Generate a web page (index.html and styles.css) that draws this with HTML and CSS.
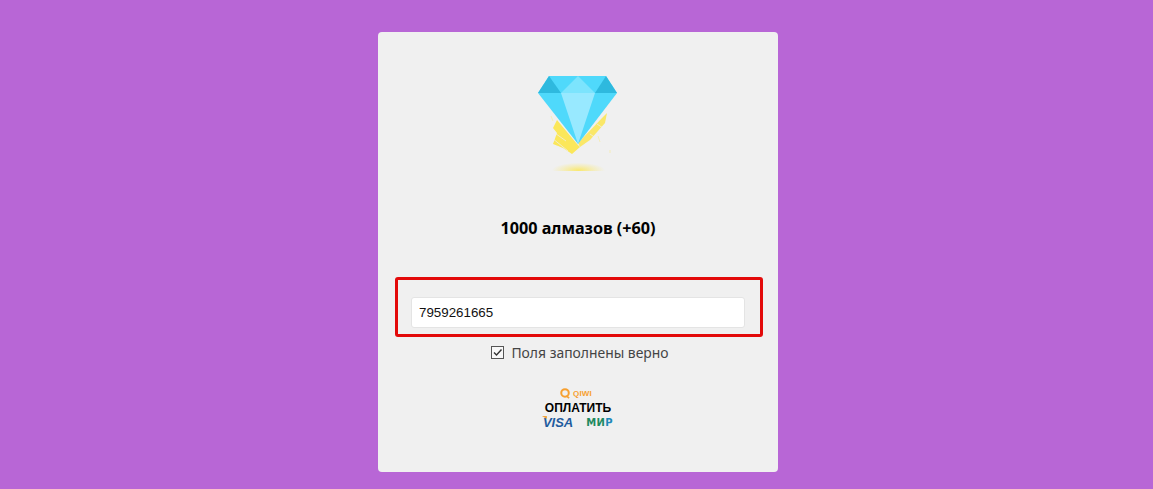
FILE: index.html
```html
<!DOCTYPE html>
<html lang="ru">
  <head>
    <meta charset="UTF-8" />
    <meta name="viewport" content="width=device-width, initial-scale=1.0" />
    <title>Оплата</title>
    <link rel="stylesheet" href="styles.css">
  </head>
  <body>
    <div class="card">
      <svg class="gem" viewBox="513 60 130 125" width="130" height="125">
        <defs>
          <radialGradient id="glow" cx="0.5" cy="0.95" r="0.5">
            <stop offset="0" stop-color="#fbe75a" stop-opacity="0.85" />
            <stop offset="0.55" stop-color="#fbe75a" stop-opacity="0.35" />
            <stop offset="1" stop-color="#fbe75a" stop-opacity="0" />
          </radialGradient>
          <filter id="soft"><feGaussianBlur stdDeviation="0.6" /></filter>
        </defs>
        <rect x="552" y="156" width="53" height="15" fill="url(#glow)" />
        <g filter="url(#soft)">
          <path d="M557 120 L577 144 L580 147 L572 154 L563 148 L553 144 L557 133 L553 128 Z" fill="#fbe75a" />
          <path d="M603 117 L607 113 L605 123 L590 140 L580 147 L578 143 Z" fill="#fbe75a" fill-opacity="0.9" />
          <path d="M552 131 L566 141 M552 138 L568 151 M557 146 L570 156 M597 124 L606 130 M590 134 L600 141" fill="none" stroke="#f0f0f0" stroke-opacity="0.7" />
        </g>
        <path d="M551 116 L553 121 M598 136 L600 142 M610 150 L610 153" fill="none" stroke="#fbe75a" stroke-opacity="0.35" />
        <path d="M549 76 L606 76 L617 93 L578 144 L538 93 Z" fill="#4fd9fb" />
        <path d="M549 76 L561 93 L538 93 Z" fill="#2eb9de" />
        <path d="M606 76 L595 93 L617 93 Z" fill="#2eb9de" />
        <path d="M578 76 L595 93 L561 93 Z" fill="#7ce4fd" />
        <path d="M561 93 L595 93 L578 144 Z" fill="#98e9ff" />
      </svg>

      <h2 class="title">1000 алмазов (+60)</h2>

      <div class="field__box">
        <input class="field" type="text" value="7959261665" />
      </div>

      <label class="agree">
        <svg viewBox="0 0 13 13" width="13" height="13">
          <rect x="0.5" y="0.5" width="12" height="12" fill="#f8f8f8" stroke="#555" />
          <path d="M3 6.5 L5.5 9 L10.5 3.5" fill="none" stroke="#333" stroke-width="1.4" />
        </svg>
        <span>Поля заполнены верно</span>
      </label>

      <button class="pay">
        <span class="pay__qiwi">
          <svg viewBox="0 0 12 12" width="12" height="11">
            <circle cx="6" cy="5.4" r="4.1" fill="none" stroke="#f7a030" stroke-width="2.2" />
            <path d="M7.5 8.5 L10.5 11" stroke="#f7a030" stroke-width="1.8" />
          </svg>
          <span>QIWI</span>
        </span>
        <span class="pay__label">ОПЛАТИТЬ</span>
        <span class="pay__cards">
          <span class="pay__visa">VISA</span>
          <span class="pay__mir">МИ<span class="pay__mir-end">Р</span></span>
        </span>
      </button>
    </div>
  </body>
</html>
```

FILE: styles.css
```css
html,
body {
  height: 100%;
}

body {
  margin: 0;
  background-color: #b866d6;
  font-family: "Noto Sans", Arial, sans-serif;
  display: flex;
  flex-direction: column;
  align-items: center;
}

.card {
  width: 400px;
  height: 440px;
  margin: 32px 0 0 3px;
  background-color: #f0f0f0;
  border-radius: 4px;
  display: flex;
  flex-direction: column;
  align-items: center;
  box-sizing: border-box;
  padding-top: 28px;
}

.gem {
  display: block;
}

.title {
  margin: 31px 0 0;
  font-size: 16.2px;
  line-height: 24px;
  font-weight: 700;
  color: #000;
}

.field__box {
  width: 368px;
  height: 60px;
  margin: 37px 0 0 2px;
  border: 3px solid #e30a0a;
  border-radius: 3px;
  box-sizing: border-box;
  padding: 17px 15px 0 13px;
}

.field {
  display: block;
  width: 100%;
  height: 31px;
  box-sizing: border-box;
  padding: 0 7px;
  border: 1px solid #e4e4e4;
  border-radius: 3px;
  background-color: #fff;
  font-family: "Liberation Sans", Arial, sans-serif;
  font-size: 13.33px;
  color: #111;
}

.agree {
  margin-top: 5px;
  padding-left: 4px;
  height: 20px;
  display: flex;
  align-items: center;
  gap: 7px;
  font-size: 13.9px;
  color: #444;
}

.pay {
  margin-top: 26px;
  padding: 0;
  border: none;
  background: none;
  cursor: pointer;
  display: flex;
  flex-direction: column;
  align-items: center;
  font-family: "Liberation Sans", Arial, sans-serif;
}

.pay__qiwi {
  height: 11px;
  padding-right: 5px;
  display: flex;
  align-items: center;
  gap: 2px;
  font-size: 8px;
  letter-spacing: 0.2px;
  font-weight: 700;
  color: #f7a030;
}

.pay__label {
  margin-top: 2px;
  font-size: 12px;
  line-height: 14px;
  font-weight: 700;
  color: #000;
}

.pay__cards {
  display: flex;
  align-items: center;
  gap: 13px;
  height: 15px;
  font-weight: 700;
}

.pay__visa {
  position: relative;
  font-size: 13px;
  font-style: italic;
  color: #1f5c9e;
}

/* оранжевый уголок на V */
.pay__visa::before {
  content: "";
  position: absolute;
  left: -1px;
  top: 1px;
  width: 5px;
  height: 3px;
  background-color: #f0a33a;
  clip-path: polygon(0 0, 100% 0, 100% 100%);
}

.pay__mir {
  font-family: "DejaVu Sans", sans-serif;
  font-size: 10px;
  letter-spacing: 0.4px;
  color: #1f8a5f;
}

.pay__mir-end {
  color: #1e88b8;
}
```
